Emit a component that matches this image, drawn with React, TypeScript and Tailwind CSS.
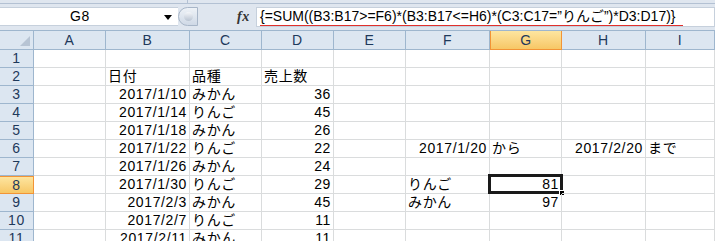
import React from 'react'

const cols = ['A', 'B', 'C', 'D', 'E', 'F', 'G', 'H', 'I']

type Cell = { text: string; align?: 'left' | 'right' }

const rows: Record<number, Record<string, Cell>> = {
  2: { B: { text: '日付' }, C: { text: '品種' }, D: { text: '売上数' } },
  3: { B: { text: '2017/1/10', align: 'right' }, C: { text: 'みかん' }, D: { text: '36', align: 'right' } },
  4: { B: { text: '2017/1/14', align: 'right' }, C: { text: 'りんご' }, D: { text: '45', align: 'right' } },
  5: { B: { text: '2017/1/18', align: 'right' }, C: { text: 'みかん' }, D: { text: '26', align: 'right' } },
  6: {
    B: { text: '2017/1/22', align: 'right' },
    C: { text: 'りんご' },
    D: { text: '22', align: 'right' },
    F: { text: '2017/1/20', align: 'right' },
    G: { text: 'から' },
    H: { text: '2017/2/20', align: 'right' },
    I: { text: 'まで' },
  },
  7: { B: { text: '2017/1/26', align: 'right' }, C: { text: 'みかん' }, D: { text: '24', align: 'right' } },
  8: {
    B: { text: '2017/1/30', align: 'right' },
    C: { text: 'りんご' },
    D: { text: '29', align: 'right' },
    F: { text: 'りんご' },
    G: { text: '81', align: 'right' },
  },
  9: {
    B: { text: '2017/2/3', align: 'right' },
    C: { text: 'みかん' },
    D: { text: '45', align: 'right' },
    F: { text: 'みかん' },
    G: { text: '97', align: 'right' },
  },
  10: { B: { text: '2017/2/7', align: 'right' }, C: { text: 'りんご' }, D: { text: '11', align: 'right' } },
  11: { B: { text: '2017/2/11', align: 'right' }, C: { text: 'みかん' }, D: { text: '11', align: 'right' } },
}

const gridCols = 'grid-cols-[34px_72px_84px_72px_72px_72px_84px_72px_84px_1fr]'

function FormulaBar() {
  return (
    <div className="bg-[#dfe6ef]">
      {/* リボン下端 */}
      <div className="flex h-[4px] border-b border-[#b3c1d3]">
        <div className="w-[188px] border-r border-[#b3c1d3]" />
      </div>
      <div className="flex h-[26px] items-start pt-[3px]">
        {/* 名前ボックス */}
        <div className="relative flex h-[19px] w-[178px] items-center justify-center border-y border-[#c6d0dc] bg-white text-[14px] text-black">
          <span className="pr-[18px]">G8</span>
          <span className="absolute right-[6px] top-[7px] h-0 w-0 border-x-[4px] border-t-[5px] border-x-transparent border-t-black" />
        </div>
        {/* つまみ */}
        <div className="relative h-[19px] w-[20px] rounded-l-full border border-[#a8b6c8] bg-gradient-to-b from-[#eef2f7] to-[#cfd9e6]">
          <span className="absolute left-[5px] top-[4px] h-[9px] w-[9px] rounded-full bg-gradient-to-b from-[#f4f6f9] to-[#b9c4d2]" />
        </div>
        <div className="flex h-[19px] w-[58px] items-center justify-end pr-[6px]">
          <span className="font-['Liberation_Serif'] text-[14px] font-bold italic text-[#333]">fx</span>
        </div>
        {/* 数式入力 */}
        <div className="flex h-[20px] flex-1 flex-col border border-[#c6d0dc] bg-white">
          <div className="h-[17px] whitespace-nowrap pl-[3px] text-[14px] leading-[17px] tracking-normal text-black">
            {'{=SUM((B3:B17>=F6)*(B3:B17<=H6)*(C3:C17=”りんご”)*D3:D17)}'}
          </div>
          <div className="ml-[3px] h-[2px] w-[423px] bg-[#e0302c]" />
        </div>
      </div>
    </div>
  )
}

function ColumnHeader({ label }: { label: string }) {
  const selected = label === 'G'
  return (
    <div
      className={
        selected
          ? 'flex h-[19px] items-center justify-center border-x border-b border-[#f29436] bg-gradient-to-b from-[#fde59f] to-[#f7c765] text-[14px] text-[#1e395b]'
          : 'flex h-[19px] items-center justify-center border-r border-b border-[#9eb6ce] bg-[#dce6f1] text-[14px] text-[#1e395b]'
      }
    >
      {label}
    </div>
  )
}

function RowHeader({ n }: { n: number }) {
  const selected = n === 8
  return (
    <div
      className={
        selected
          ? 'flex h-[18px] items-center justify-center border-y border-r border-[#f29436] bg-gradient-to-b from-[#fde59f] to-[#f7c765] text-[14px] text-[#1e395b]'
          : 'flex h-[18px] items-center justify-center border-r border-b border-[#9eb6ce] bg-[#dce6f1] text-[14px] text-[#1e395b]'
      }
    >
      {n}
    </div>
  )
}

export default function App() {
  const rowNums = Array.from({ length: 11 }, (_, i) => i + 1)

  return (
    <div className="h-[241px] w-[715px] overflow-hidden bg-white font-['Liberation_Sans','Noto_Sans_CJK_JP',sans-serif] tracking-[0.04em]">
      <FormulaBar />

      <div className={`grid ${gridCols} border-t border-[#9eb6ce]`}>
        {/* 左上の角 */}
        <div className="relative h-[19px] border-r border-b border-[#9eb6ce] bg-[#dce6f1]">
          <span className="absolute bottom-[3px] right-[3px] h-0 w-0 border-b-[10px] border-l-[10px] border-b-[#b7c4d4] border-l-transparent" />
        </div>
        {cols.map(c => (
          <ColumnHeader key={c} label={c} />
        ))}

        {rowNums.map(n => (
          <React.Fragment key={n}>
            <RowHeader n={n} />
            {cols.map(c => {
              const cell = rows[n]?.[c]
              const isActive = n === 8 && c === 'G'
              return (
                <div
                  key={c}
                  className={`relative flex h-[18px] items-center whitespace-nowrap border-r border-b border-[#dadcdd] px-[2px] text-[14px] text-black ${
                    cell?.align === 'right' ? 'justify-end' : 'justify-start'
                  }`}
                >
                  {cell?.text}
                  {isActive && (
                    <>
                      <span className="pointer-events-none absolute -left-[2px] -top-[2px] h-[20px] w-[75px] border-[3px] border-[#1a1a1a]" />
                      <span className="absolute -bottom-[3px] -right-[4px] h-[6px] w-[6px] border border-white bg-black" />
                    </>
                  )}
                </div>
              )
            })}
          </React.Fragment>
        ))}
      </div>
    </div>
  )
}
